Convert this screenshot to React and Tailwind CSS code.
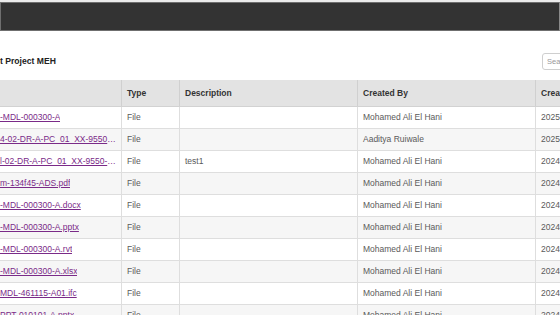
import React from 'react';

const rows = [
  { name: '-MDL-000300-A', type: 'File', desc: '', by: 'Mohamed Ali El Hani', created: '2025-03-12 10:41' },
  { name: '4-02-DR-A-PC_01_XX-9550-0001.pdf', type: 'File', desc: '', by: 'Aaditya Ruiwale', created: '2025-02-27 09:15' },
  { name: 'l-02-DR-A-PC_01_XX-9550-0002.pdf', type: 'File', desc: 'test1', by: 'Mohamed Ali El Hani', created: '2024-12-04 16:20' },
  { name: 'm-134f45-ADS.pdf', type: 'File', desc: '', by: 'Mohamed Ali El Hani', created: '2024-11-18 11:02' },
  { name: '-MDL-000300-A.docx', type: 'File', desc: '', by: 'Mohamed Ali El Hani', created: '2024-11-18 11:00' },
  { name: '-MDL-000300-A.pptx', type: 'File', desc: '', by: 'Mohamed Ali El Hani', created: '2024-11-18 10:58' },
  { name: '-MDL-000300-A.rvt', type: 'File', desc: '', by: 'Mohamed Ali El Hani', created: '2024-11-18 10:55' },
  { name: '-MDL-000300-A.xlsx', type: 'File', desc: '', by: 'Mohamed Ali El Hani', created: '2024-11-18 10:51' },
  { name: 'MDL-461115-A01.ifc', type: 'File', desc: '', by: 'Mohamed Ali El Hani', created: '2024-11-15 14:30' },
  { name: 'PPT-010101-A.pptx', type: 'File', desc: '', by: 'Mohamed Ali El Hani', created: '2024-11-15 14:28' },
];

const cols = 'grid grid-cols-[121px_58px_178px_178px_100px]';

export default function App() {
  return (
    <div className="w-[560px] h-[315px] overflow-hidden bg-white font-['Liberation_Sans',Arial,sans-serif] text-[8.5px]">
      {/* top bar */}
      <div className="h-[2px] bg-[#ececec]" />
      <div className="h-[29px] bg-[#333333] border border-[#6f6f6f] border-r-[#8a8a8a]" />

      <div className="w-[635px]">
        {/* title + search */}
        <div className="flex items-center h-[49px] pt-[11px]">
          <h2 className="font-bold text-[#222] text-[8.6px]">t Project MEH</h2>
          <input
            placeholder="Search"
            className="ml-auto mr-[3px] w-[90px] h-[17px] border border-[#cfcfcf] rounded-[3px] px-[4px] text-[7.5px] text-[#555] placeholder:text-[#999] outline-none"
          />
        </div>

        {/* table */}
        <div className={`${cols} h-[27px] bg-[#e3e3e3] border-b border-[#d2d2d2] font-bold text-[#333]`}>
          <div />
          <div className="flex items-center pl-[5px] border-l border-[#d0d0d0]">Type</div>
          <div className="flex items-center pl-[5px] border-l border-[#d0d0d0]">Description</div>
          <div className="flex items-center pl-[5px] border-l border-[#d0d0d0]">Created By</div>
          <div className="flex items-center pl-[5px] border-l border-[#d0d0d0]">Created</div>
        </div>
        {rows.map((r, i) => (
          <div
            key={i}
            className={`${cols} h-[22px] border-b border-[#dedede] text-[#5a5a5a] ${i % 2 === 1 ? 'bg-[#f6f6f6]' : 'bg-white'}`}
          >
            <div className="flex items-center min-w-0 pr-[5px]">
              <a href="#" className="block truncate text-[#7a2a88] underline underline-offset-[1px]">{r.name}</a>
            </div>
            <div className="flex items-center pl-[5px] border-l border-[#dedede]">{r.type}</div>
            <div className="flex items-center pl-[5px] border-l border-[#dedede]">{r.desc}</div>
            <div className="flex items-center pl-[5px] border-l border-[#dedede]">{r.by}</div>
            <div className="flex items-center pl-[5px] border-l border-[#dedede] whitespace-nowrap">{r.created}</div>
          </div>
        ))}
      </div>
    </div>
  );
}
